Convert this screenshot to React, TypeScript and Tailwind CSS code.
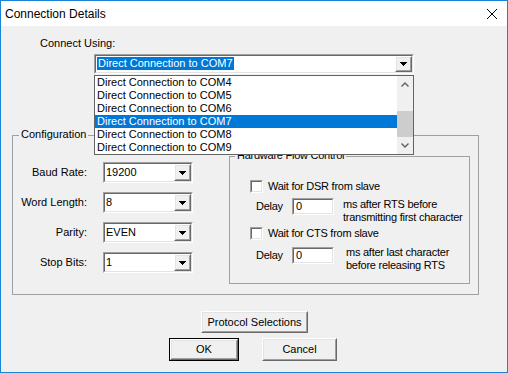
import React from 'react'

// classic 3D edges
const sunkenOuter = 'border border-t-[#a0a0a0] border-l-[#a0a0a0] border-r-white border-b-white'
const sunkenInner = 'border border-t-[#696969] border-l-[#696969] border-r-[#e3e3e3] border-b-[#e3e3e3]'
const raisedOuter = 'border border-t-white border-l-white border-r-[#696969] border-b-[#696969]'
const raisedInner = 'border border-t-[#e3e3e3] border-l-[#e3e3e3] border-r-[#a0a0a0] border-b-[#a0a0a0]'

function Arrow() {
  return (
    <svg width="7" height="4" viewBox="0 0 7 4" shapeRendering="crispEdges">
      <path d="M0 0h7v1h-1v1h-1v1h-1v1h-1v-1h-1v-1h-1v-1h-1z" fill="#000" />
    </svg>
  )
}

function DropButton() {
  return (
    <div className={`w-[17px] h-full bg-[#f0f0f0] ${raisedOuter}`}>
      <div className={`h-full flex items-center justify-center ${raisedInner}`}>
        <Arrow />
      </div>
    </div>
  )
}

function Combo({ value }: { value: string }) {
  return (
    <div className={`w-[90px] h-[21px] ${sunkenOuter}`}>
      <div className={`h-full flex bg-white ${sunkenInner}`}>
        <div className="flex-1 flex items-center pl-[1px] leading-[13px]">{value}</div>
        <DropButton />
      </div>
    </div>
  )
}

function Checkbox() {
  return (
    <div className={`w-[13px] h-[13px] ${sunkenOuter}`}>
      <div className={`w-full h-full bg-white ${sunkenInner}`} />
    </div>
  )
}

function TextBox({ value }: { value: string }) {
  return (
    <div className={`w-[42px] h-[17px] ${sunkenOuter}`}>
      <div className={`h-full bg-white flex items-center pl-[2px] leading-[13px] ${sunkenInner}`}>{value}</div>
    </div>
  )
}

function Button({ label, className, isDefault }: { label: string; className: string; isDefault?: boolean }) {
  const face = (
    <div className={`h-full ${raisedOuter}`}>
      <div className={`h-full flex items-center justify-center leading-[13px] ${raisedInner}`}>{label}</div>
    </div>
  )
  if (isDefault) {
    return <div className={`border border-black bg-[#f0f0f0] ${className}`}>{face}</div>
  }
  return <div className={`bg-[#f0f0f0] ${className}`}>{face}</div>
}

function Chevron({ up }: { up?: boolean }) {
  return (
    <svg width="8" height="5" viewBox="0 0 8 5">
      <path d={up ? 'M0.5 4.5L4 1L7.5 4.5' : 'M0.5 0.5L4 4L7.5 0.5'} fill="none" stroke="#606060" strokeWidth="1.4" />
    </svg>
  )
}

const ports = ['COM4', 'COM5', 'COM6', 'COM7', 'COM8', 'COM9']

export default function App() {
  return (
    <div className="w-[508px] h-[373px] flex flex-col border border-[#1883d7] bg-white font-['Liberation_Sans',Arial,sans-serif] text-[11px] text-black">
      {/* title bar */}
      <div className="h-[25px] flex items-center bg-white">
        <span className="ml-[4px] text-[12px] leading-[16px]">Connection Details</span>
        <svg className="ml-auto mr-[10px]" width="10" height="10" viewBox="0 0 10 10">
          <path d="M0 0L10 10M10 0L0 10" stroke="#000" strokeWidth="1" />
        </svg>
      </div>

      <div className="relative flex-1 bg-[#f0f0f0] flex flex-col items-start">
        <div className="ml-[39px] mt-[11px] leading-[13px]">Connect Using:</div>

        <div className={`ml-[93px] mt-[4px] w-[320px] h-[20px] ${sunkenOuter}`}>
          <div className={`h-full flex bg-white ${sunkenInner}`}>
            <div className="flex-1 pl-[1px] pt-[1px]">
              <span className="block w-fit h-[13px] px-[1px] leading-[13px] bg-[#0078d7] text-white">Direct Connection to COM7</span>
            </div>
            <DropButton />
          </div>
        </div>

        {/* Configuration group */}
        <div className="relative ml-[11px] mt-[61px] w-[467px] h-[160px] border border-[#a0a0a0] flex items-start">
          <span className="absolute left-[6px] -top-[8px] px-[2px] leading-[13px] bg-[#f0f0f0]">Configuration</span>

          <div className="pt-[26px] grid grid-cols-[74px_90px] gap-x-[16px] gap-y-[9px]">
            <div className="flex items-center justify-end">Baud Rate:</div>
            <Combo value="19200" />
            <div className="flex items-center justify-end">Word Length:</div>
            <Combo value="8" />
            <div className="flex items-center justify-end">Parity:</div>
            <Combo value="EVEN" />
            <div className="flex items-center justify-end">Stop Bits:</div>
            <Combo value="1" />
          </div>

          {/* Hardware flow control group */}
          <div className="relative ml-[36px] mt-[20px] w-[241px] h-[128px] border border-[#a0a0a0] flex flex-col items-start whitespace-nowrap tracking-[-0.25px]">
            <span className="absolute left-[5px] -top-[8px] px-[2px] leading-[13px] bg-[#f0f0f0]">Hardware Flow Control</span>

            <div className="ml-[20px] mt-[23px] flex items-center gap-[5px] leading-[13px]">
              <Checkbox />
              <span>Wait for DSR from slave</span>
            </div>
            <div className="ml-[26px] mt-[5px] flex items-start">
              <span className="w-[36px] leading-[17px]">Delay</span>
              <TextBox value="0" />
              <div className="ml-[9px] leading-[13px]">
                <div>ms after RTS before</div>
                <div>transmitting first character</div>
              </div>
            </div>
            <div className="ml-[20px] mt-[3px] flex items-center gap-[5px] leading-[13px]">
              <Checkbox />
              <span>Wait for CTS from slave</span>
            </div>
            <div className="ml-[26px] mt-[7px] flex items-start">
              <span className="w-[36px] leading-[17px]">Delay</span>
              <TextBox value="0" />
              <div className="ml-[12px] -mt-[1px] leading-[13px]">
                <div>ms after last character</div>
                <div>before releasing RTS</div>
              </div>
            </div>
          </div>
        </div>

        <Button label="Protocol Selections" className="ml-[200px] mt-[16px] w-[107px] h-[22px]" />
        <div className="mt-[5px] flex">
          <Button label="OK" isDefault className="ml-[168px] w-[70px] h-[23px]" />
          <Button label="Cancel" className="ml-[23px] w-[75px] h-[23px]" />
        </div>

        {/* open drop-down list */}
        <div className="absolute z-10 left-[93px] top-[49px] w-[320px] h-[80px] border border-[#646464] bg-white flex">
          <div className="flex-1 flex flex-col">
            {ports.map((p) => (
              <div
                key={p}
                className={
                  p === 'COM7'
                    ? 'h-[13px] leading-[13px] pl-[2px] bg-[#0078d7] text-white'
                    : 'h-[13px] leading-[13px] pl-[2px]'
                }
              >
                Direct Connection to {p}
              </div>
            ))}
          </div>
          <div className="w-[16px] bg-[#f0f0f0] flex flex-col">
            <div className="h-[17px] flex items-center justify-center">
              <Chevron up />
            </div>
            <div className="h-[18px]" />
            <div className="h-[26px] bg-[#cdcdcd]" />
            <div className="h-[17px] flex items-center justify-center">
              <Chevron />
            </div>
          </div>
        </div>
      </div>
    </div>
  )
}
